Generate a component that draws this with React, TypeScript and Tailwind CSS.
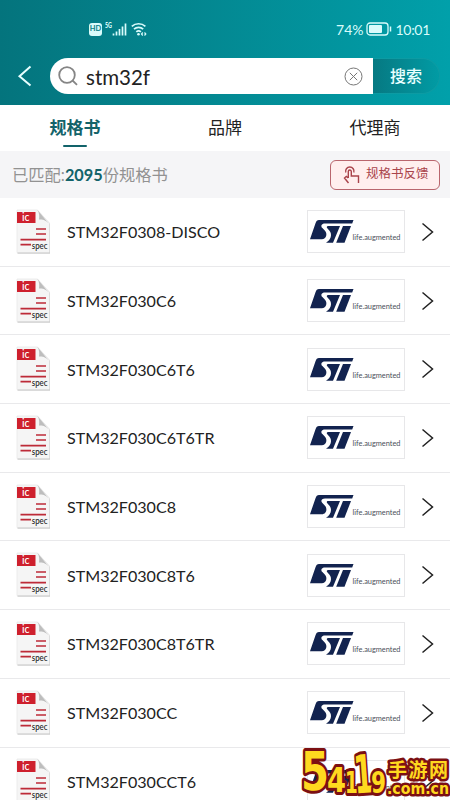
import React from 'react';

interface PartRowProps {
  name: string;
}

const parts: string[] = [
  'STM32F0308-DISCO',
  'STM32F030C6',
  'STM32F030C6T6',
  'STM32F030C6T6TR',
  'STM32F030C8',
  'STM32F030C8T6',
  'STM32F030C8T6TR',
  'STM32F030CC',
  'STM32F030CCT6',
];

const StatusBar: React.FC = () => (
  <div className="flex h-[56px] items-center pl-[89px] pr-5 pt-0.5 text-[#d9fbfb]">
    <div className="flex h-[13px] w-[13px] items-center justify-center rounded-[3px] bg-[#d9fbfb] text-[7.5px] font-bold text-[#077e86]">
      HD
    </div>
    <svg className="ml-[3px] h-4 w-[22px]" viewBox="0 0 22 16">
      <text x="0" y="6.5" fontSize="6.5" fontWeight="900" textLength="7" lengthAdjust="spacingAndGlyphs" fill="currentColor">5G</text>
      <path d="M8.5 14.5v-2M11.5 14.5v-4M14.5 14.5V8M17.5 14.5v-9M20.5 14.5v-12" stroke="currentColor" strokeWidth="1.7" />
    </svg>
    <svg className="ml-1 h-4 w-4" viewBox="0 0 16 16" fill="none" stroke="currentColor" strokeWidth="1.7">
      <path d="M.8 5.4a10 10 0 0 1 13.6 0M3 8.2a6.800 6.800 0 0 1 9.200 0M5.300 10.800a3.500 3.500 0 0 1 4.600 0" />
      <circle cx="7.5" cy="13.2" r="1.3" fill="currentColor" stroke="none" />
      <path d="M11.800 11.500 10.500 13l1.300 1.500M13.500 11.500l1.300 1.500-1.300 1.500" strokeWidth="1.2" />
    </svg>
    <span className="ml-auto text-[14px]">74%</span>
    <svg className="ml-0.5 h-[14px] w-[26px]" viewBox="0 0 26 14">
      <rect x="1" y="1" width="21" height="12" rx="3" fill="none" stroke="currentColor" strokeWidth="1.3" />
      <rect x="3" y="3" width="13" height="8" rx="1" fill="currentColor" />
      <path d="M24.5 4.5v5" stroke="currentColor" strokeWidth="1.5" />
    </svg>
    <span className="ml-1 text-[14px] tracking-[-0.3px]">10:01</span>
  </div>
);

const SearchBar: React.FC = () => (
  <div className="flex items-center pl-[17px] pr-[10px] pt-[2px]">
    <svg className="h-[22px] w-4" viewBox="0 0 16 22" fill="none" stroke="#e8ffff" strokeWidth="2">
      <path d="M13.5 1.5 2.5 11.2l11 9.3" />
    </svg>
    <div className="ml-[17px] flex h-9 w-[323px] items-center rounded-l-full bg-white pl-2 pr-[10px]">
      <svg className="h-5 w-5" viewBox="0 0 20 20" fill="none" stroke="#858585" strokeWidth="1.8">
        <circle cx="9" cy="9" r="7.8" />
        <path d="m14.5 14.5 4.500 4.300" />
      </svg>
      <span className="ml-2 pt-0.5 text-[20.5px] leading-none text-[#222]">stm32f</span>
      <svg className="ml-auto h-[19px] w-[19px]" viewBox="0 0 19 19" fill="none" stroke="#777" strokeWidth="1">
        <circle cx="9.5" cy="9.5" r="8.5" />
        <path d="m5.8 5.8 7.400 7.400m0-7.400-7.400 7.400" />
      </svg>
    </div>
    <button className="h-9 flex-1 rounded-r-full border border-l-0 border-[#0d9ba3] bg-linear-to-r from-[#067982] to-[#019ba4] text-base font-medium text-[#e8ffff]">
      搜索
    </button>
  </div>
);

const SpecIcon: React.FC = () => (
  <svg className="h-[46px] w-[36px]" viewBox="0 0 36 46">
    <path d="M1.5 1.500h20L34 15v29.500H1.500z" fill="#b5b5b5" />
    <path d="M1 1h20.500L33.500 14v29.500H1z" fill="#f5f5f5" stroke="#e2e2e2" strokeWidth=".6" />
    <path d="M21.500 1c1.800 3 2 6 1.500 9.500 3-.5 7.500.5 10.500 5z" fill="#bdbdbd" />
    <path d="M1 3h18.500v11H1z" fill="#ce202d" />
    <text x="6" y="11.8" fontSize="10.5" fontWeight="500" fill="#fff">ic</text>
    <path d="M20 20h10M20 25h10M4.500 30.700H30M4.500 35.700H15" stroke="#bd2b38" strokeWidth="1.7" />
    <text x="15.8" y="39.8" fontSize="8.5" fontWeight="500" textLength="15.7" lengthAdjust="spacingAndGlyphs" fill="#222">spec</text>
  </svg>
);

const StLogo: React.FC = () => (
  <div className="h-[43px] w-[98px] border border-[#e7e7e9] bg-white">
    <svg className="h-[41px] w-[96px]" viewBox="0 0 96 41">
      <g fill="#12234f">
        <path d="M11 9h34.500l-1.300 3.400H17c-3.600 0-4.600 2.600-2.600 4.700l2.600 2.700c2.600 2.800 1.500 8.400-3.200 8.400H2L7.600 12C8.200 10 9.300 9 11 9z" />
        <path d="M20 15h12L25 31.700h-7c4.800-2.500 6.500-8.200 3.500-11.900l-2.400-2.800c-.8-1-.1-2 .9-2z" />
        <path d="M35 15h8L36.500 31.700h-8.300z" />
      </g>
      <text x="44.5" y="28.8" fontSize="7" textLength="48" lengthAdjust="spacingAndGlyphs" fill="#4a4f5a">life.augmented</text>
    </svg>
  </div>
);

const PartRow: React.FC<PartRowProps> = ({ name }) => (
  <div className="flex h-[68.7px] shrink-0 items-center border-b border-[#e9e9eb] pl-4 pr-4">
    <SpecIcon />
    <span className="ml-[15px] pt-px text-[16.1px] text-[#222]">{name}</span>
    <div className="ml-auto">
      <StLogo />
    </div>
    <svg className="ml-[16px] h-5 w-[13px]" viewBox="0 0 13 20" fill="none" stroke="#222" strokeWidth="1.5">
      <path d="m1.500 1.500 10 8.500-10 8.500" />
    </svg>
  </div>
);

const Watermark: React.FC = () => (
  <svg className="absolute bottom-0 right-0 h-[54px] w-[150px]" viewBox="0 0 150 54">
    <g
      className="font-['DejaVu_Sans','Noto_Sans_CJK_SC',sans-serif]"
      fill="#ffd91f"
      stroke="#7c1013"
      strokeWidth="6"
      strokeLinejoin="round"
      paintOrder="stroke"
      fontWeight="700"
    >
      <text x="1" y="44" fontSize="53" textLength="28" lengthAdjust="spacingAndGlyphs">5</text>
      <text x="27" y="46" fontSize="33" textLength="19" lengthAdjust="spacingAndGlyphs">4</text>
      <text x="45" y="47" fontSize="31" textLength="13" lengthAdjust="spacingAndGlyphs">1</text>
      <text x="54" y="47" fontSize="53" textLength="19" lengthAdjust="spacingAndGlyphs" transform="rotate(-4 63 30)">1</text>
      <text x="71" y="47" fontSize="31" textLength="15" lengthAdjust="spacingAndGlyphs">9</text>
      <text x="88" y="31" fontSize="19" strokeWidth="5" textLength="60">手游网</text>
      <text x="87" y="48" fontSize="15" strokeWidth="5" textLength="62" lengthAdjust="spacingAndGlyphs">.com.cn</text>
    </g>
  </svg>
);

const App: React.FC = () => {
  return (
    <div className="relative flex h-[800px] w-[450px] flex-col overflow-hidden bg-white font-['Lato','Noto_Sans_CJK_SC',sans-serif]">
      <header className="h-[105px] shrink-0 bg-linear-to-r from-[#04747d] to-[#01a0aa]">
        <StatusBar />
        <SearchBar />
      </header>
      <nav className="grid h-[46px] shrink-0 grid-cols-3 pt-[10px] text-center text-[17px] text-[#222]">
        <div className="flex flex-col items-center font-bold text-[#12636a]">
          规格书
          <div className="mt-[4px] h-[2.5px] w-6 rounded-full bg-[#12636a]" />
        </div>
        <div>品牌</div>
        <div>代理商</div>
      </nav>
      <div className="flex h-[47px] shrink-0 items-center justify-between bg-[#f5f5f7] pl-3 pr-[10px] text-[16.3px] text-[#929292]">
        <div className="pt-0.5">
          已匹配:<span className="font-bold text-[#12636a]">2095</span>份规格书
        </div>
        <button className="flex h-[30px] w-[110px] items-center rounded-md border border-[#b9656d] bg-[#ffeeee] pl-[12px] text-[12.5px] text-[#a9434b]">
          <svg className="mr-1.5 h-[18px] w-[17px]" viewBox="0 0 17 18" fill="none" stroke="currentColor" strokeWidth="1.4">
            <path d="M2.800 6.500a4.200 4.200 0 1 1 8 0M5.300 12V5.500a1.500 1.500 0 0 1 3 0V10H15.500v7M5.300 12 3.300 10.500 1.500 12l4 5" />
          </svg>
          规格书反馈
        </button>
      </div>
      <main className="flex flex-col">
        {parts.map((part) => (
          <PartRow key={part} name={part} />
        ))}
      </main>
      <Watermark />
    </div>
  );
};

export default App;
